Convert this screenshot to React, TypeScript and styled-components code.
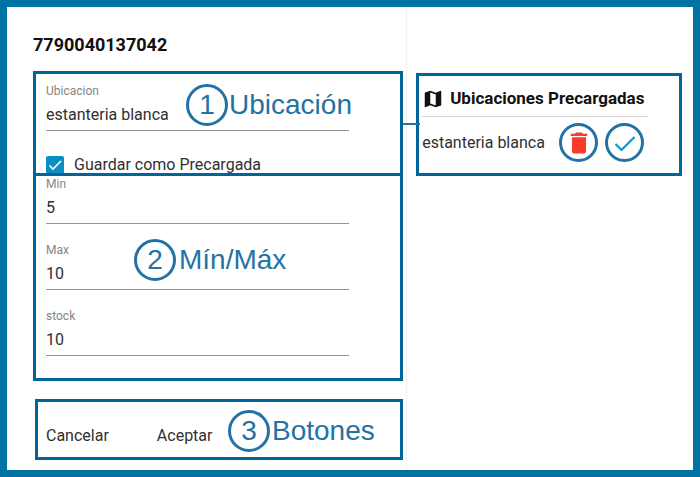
import React from "react";
import styled, { createGlobalStyle } from "styled-components";

const frameBlue = "#0073a5";
const boxBlue = "#00669a";
const noteBlue = "#2472a4";

const GlobalStyle = createGlobalStyle`
  *, *::before, *::after { box-sizing: border-box; }
  body {
    margin: 0;
    background: #fff;
    color: #303030;
    font: 16px/20px Roboto, "Liberation Sans", sans-serif;
  }
`;

const Frame = styled.main`
  display: grid;
  grid-template-columns: 7fr 5fr;
  min-height: 100vh;
  border: 7px solid ${frameBlue};
`;

const FormColumn = styled.form`
  padding: 27px 3px 10px 26px;
  border-right: 1px solid #f1f1f4;
`;

const SideColumn = styled.aside`
  padding: 66px 11px 10px 9px;
`;

const Title = styled.h1`
  margin: 0 0 15px;
  color: #111;
  font-size: 18px;
  font-weight: 700;
  line-height: 22px;
`;

const Box = styled.section`
  position: relative;
  border: 3px solid ${boxBlue};
  background: #fff;
`;

const LocationBox = styled(Box)`
  padding: 10px 51px 0 10px;
  border-bottom: 0;
`;

const RangeBox = styled(Box)`
  display: flex;
  flex-direction: column;
  gap: 19px;
  padding: 1px 51px 22px 10px;
`;

const ActionsBox = styled(Box)`
  display: flex;
  gap: 48px;
  margin: 18px 0 0 2px;
  padding: 24px 8px 11px;
`;

const Field = styled.label`
  display: flex;
  flex-direction: column;
`;

const FieldName = styled.span`
  color: #858585;
  font-size: 12px;
  line-height: 14px;
`;

const FieldInput = styled.input`
  width: 100%;
  height: 33px;
  padding: 0;
  border: 0;
  border-bottom: 1px solid #949494;
  outline: 0;
  background: transparent;
  color: inherit;
  font: inherit;
`;

const CheckRow = styled.label`
  display: flex;
  align-items: center;
  gap: 10px;
  height: 17px;
  margin-top: 25px;
`;

const CheckBox = styled.input`
  flex: none;
  appearance: none;
  width: 18px;
  height: 18px;
  margin: 0;
  border-radius: 2px;
  background: #0a8fc4;
`;

const CheckHolder = styled.span`
  display: grid;
  > * { grid-area: 1 / 1; }
  > svg { pointer-events: none; }
`;

const TextButton = styled.button`
  padding: 0;
  border: 0;
  background: none;
  color: inherit;
  font: inherit;
  cursor: pointer;
`;

const Note = styled.div<{ $left: number; $top: number; $gap: number }>`
  position: absolute;
  left: ${(p) => p.$left}px;
  top: ${(p) => p.$top}px;
  display: flex;
  align-items: center;
  gap: ${(p) => p.$gap}px;
  color: ${noteBlue};
  font: 28px/44px "Liberation Sans", Arial, sans-serif;
  pointer-events: none;
`;

const NoteNumber = styled.span`
  display: grid;
  place-items: center;
  width: 42px;
  height: 42px;
  border: 3px solid ${noteBlue};
  border-radius: 50%;
  line-height: 36px;
`;

const SavedBox = styled(Box)`
  padding: 10px 31px 11px 3px;
`;

const Connector = styled.span`
  position: absolute;
  top: 47px;
  left: -16px;
  width: 17px;
  height: 2px;
  background: ${noteBlue};
`;

const SavedTitle = styled.h2`
  display: flex;
  align-items: center;
  gap: 6px;
  margin: 0;
  padding-bottom: 5px;
  border-bottom: 1px solid #d2d2d2;
  color: #111;
  font-size: 17px;
  font-weight: 700;
  line-height: 25px;
  white-space: nowrap;
`;

const SavedRow = styled.div`
  display: flex;
  align-items: center;
  gap: 7px;
  padding: 6px 4px 0 0;
`;

const SavedName = styled.span`
  flex: 1;
  white-space: nowrap;
`;

const RoundButton = styled.button`
  display: grid;
  place-items: center;
  flex: none;
  width: 39px;
  height: 39px;
  padding: 0;
  border: 3px solid ${noteBlue};
  border-radius: 50%;
  background: #fff;
  cursor: pointer;
`;

function TextField({ name, value }: { name: string; value: string }) {
  return (
    <Field>
      <FieldName>{name}</FieldName>
      <FieldInput type="text" defaultValue={value} />
    </Field>
  );
}

interface CalloutProps {
  number: number;
  text: string;
  left: number;
  top: number;
  gap?: number;
}

function Callout({ number, text, left, top, gap = 2 }: CalloutProps) {
  return (
    <Note $left={left} $top={top} $gap={gap}>
      <NoteNumber>{number}</NoteNumber>
      <span>{text}</span>
    </Note>
  );
}

export default function App() {
  return (
    <>
      <GlobalStyle />
      <Frame>
        <FormColumn onSubmit={(e) => e.preventDefault()}>
          <Title>7790040137042</Title>
          <LocationBox>
            <TextField name="Ubicacion" value="estanteria blanca" />
            <CheckRow>
              <CheckHolder>
                <CheckBox type="checkbox" defaultChecked />
                <svg width="18" height="18" viewBox="0 0 18 18" fill="none" aria-hidden="true">
                  <path d="M3.5 9.5 7 13 15 5" stroke="#fff" strokeWidth="1.6" />
                </svg>
              </CheckHolder>
              Guardar como Precargada
            </CheckRow>
            <Callout number={1} text="Ubicación" left={150} top={9} gap={1} />
          </LocationBox>
          <RangeBox>
            <TextField name="Min" value="5" />
            <TextField name="Max" value="10" />
            <TextField name="stock" value="10" />
            <Callout number={2} text="Mín/Máx" left={98} top={62} gap={3} />
          </RangeBox>
          <ActionsBox>
            <TextButton type="button">Cancelar</TextButton>
            <TextButton type="submit">Aceptar</TextButton>
            <Callout number={3} text="Botones" left={190} top={7} />
          </ActionsBox>
        </FormColumn>
        <SideColumn>
          <SavedBox>
            <Connector />
            <SavedTitle>
              <svg width="22" height="22" viewBox="0 0 24 24" fill="#111" aria-hidden="true">
                <path d="M20.5 3l-.16.03L15 5.1 9 3 3.36 4.9c-.21.07-.36.25-.36.48V20.5c0 .28.22.5.5.5l.16-.03L9 18.9l6 2.1 5.64-1.9c.21-.07.36-.25.36-.48V3.5c0-.28-.22-.5-.5-.5zM15 19l-6-2.11V5l6 2.11V19z" />
              </svg>
              Ubicaciones Precargadas
            </SavedTitle>
            <SavedRow>
              <SavedName>estanteria blanca</SavedName>
              <RoundButton type="button" aria-label="Eliminar">
                <svg width="28" height="28" viewBox="0 0 24 24" fill="#fb3a2b" aria-hidden="true">
                  <path d="M6 19c0 1.1.9 2 2 2h8c1.1 0 2-.9 2-2V7H6v12zM19 4h-3.5l-1-1h-5l-1 1H5v2h14V4z" />
                </svg>
              </RoundButton>
              <RoundButton type="button" aria-label="Seleccionar">
                <svg width="28" height="28" viewBox="0 0 28 28" fill="none" aria-hidden="true">
                  <path d="M4.5 15 10.5 21 23.5 8" stroke="#0a9bcb" strokeWidth="2.2" />
                </svg>
              </RoundButton>
            </SavedRow>
          </SavedBox>
        </SideColumn>
      </Frame>
    </>
  );
}
